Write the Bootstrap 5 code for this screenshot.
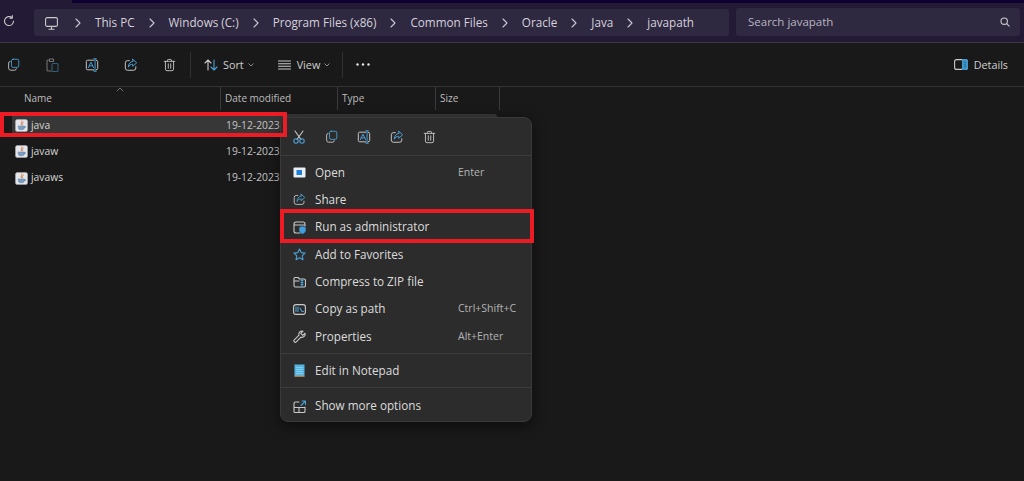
<!DOCTYPE html>
<html lang="en">
<head>
  <meta charset="UTF-8">
  <title>javapath - File Explorer</title>
  <meta name="viewport" content="width=device-width, initial-scale=1">
  <link rel="stylesheet" href="https://cdn.jsdelivr.net/npm/bootstrap@5.3.0/dist/css/bootstrap.min.css">
  <script src="https://cdn.jsdelivr.net/npm/bootstrap@5.3.0/dist/js/bootstrap.bundle.min.js"></script>
  <style>
    html, body { height: 100%; }
    body {
      background: #191919;
      color: #d8d8d8;
      font-family: "Open Sans", "Noto Sans", "Liberation Sans", sans-serif;
      font-size: 11px;
      overflow: hidden;
      position: relative;
    }
    svg { display: block; flex: none; fill: none; stroke-width: 1.1; stroke-linecap: round; stroke-linejoin: round; }
    .g { stroke: #c9c9c9; }
    .b { stroke: #4a9fd4; }

    /* address bar */
    .topbar { height: 43px; background: #231a36; border-bottom: 1px solid #3b3841; position: relative; }
    .strip { position: absolute; top: 0; left: 72px; right: 0; height: 3px; background: #0e0030; }
    .refresh { width: 34px; padding-left: 3px; }
    .crumbs { width: 695px; height: 27px; background: #2f2841; border-radius: 3px; margin-top: 9px; padding: 1px 0 0 11px; color: #d4d2da; font-size: 11.7px; }
    .crumbs .pc { margin-right: 3px; }
    .crumbs .sep { width: 6px; margin: 0 14px; }
    .search { width: 284px; height: 28px; background: #2f2841; border-radius: 3px; margin: 8px 0 0 7px; padding: 0 10px 0 12px; color: #b8b5c0; font-size: 11.5px; }

    /* command bar */
    .toolbar { height: 44px; border-bottom: 1px solid #333; padding-right: 16px; color: #d0d0d0; font-size: 10.8px; }
    .toolbar span { padding-top: 2px; }
    .tool { width: 39px; display: flex; justify-content: center; }
    .tool:first-child { margin-left: -6px; }
    .vsep { width: 1px; height: 26px; background: #303030; }
    .sep-a { margin-left: 1px; }
    .sort-ic { margin-left: 13px; margin-right: 5px; }
    .view-ic { margin-left: 24px; margin-right: 6px; }
    .chev { width: 6px; margin-left: 4px; }
    .sep-b { margin-left: 12px; }
    .dots { margin-left: 13px; }
    .det-ic { margin-left: auto; margin-right: 6px; }

    /* file list */
    .head { height: 24px; position: relative; color: #bdbdbd; font-size: 10px; }
    .head > div { height: 23px; border-right: 1px solid #3a3a3a; padding-left: 4px; display: flex; align-items: center; }
    .head > .c-name { width: 221px; padding-left: 24px; }
    .head > .c-date { width: 117px; }
    .head > .c-type { width: 98px; }
    .head > .c-size { width: 64px; }
    .sort-up { position: absolute; left: 116px; top: 0; }
    .list { font-size: 10.3px; }
    .row-file { height: 26.7px; margin-left: 12px; width: 485px; border-radius: 3px; }
    .row-file.cur { background: #373737; height: 23px; margin-top: 3px; margin-bottom: 1px; }
    .row-file .nm { width: 214px; display: flex; align-items: center; gap: 3px; padding-left: 3px; color: #d6d6d6; }
    .row-file .dt { color: #c4c4c4; }

    /* context menu */
    .ctx.dropdown-menu {
      display: block; left: 280px; top: 117px; width: 252px; height: 305px;
      background: #2c2c2c; border: 1px solid #3a3a3a; border-radius: 8px;
      padding: 0; font-size: 11.7px; color: #dcdcdc; box-shadow: 0 4px 14px rgba(0,0,0,.5);
    }
    .ctx-tools { height: 37px; padding-left: 2px; }
    .ctx-tools .t { width: 32.5px; display: flex; justify-content: center; }
    .ctx .dropdown-divider { border-color: #3c3c3c; margin: 0; opacity: 1; }
    .ctx .gap-line { margin: 3px 0; }
    .ctx .gap-last { margin: 3px 0 4px; }
    .ctx .dropdown-item {
      color: #dcdcdc; height: 27.3px; padding: 0 0 0 12px; display: flex; align-items: center; gap: 9px;
    }
    .ctx .key { position: absolute; left: 177px; color: #b4b4b4; font-size: 10.5px; }
    .first { margin-top: 3px; }

    /* annotations */
    .redbox { position: absolute; border: 4px solid #ed1c24; z-index: 1001; pointer-events: none; }
    .red-file { left: 0; top: 112px; width: 287px; height: 25px; }
    .red-admin { left: 280px; top: 209px; width: 254px; height: 34px; }
  </style>
</head>
<body>
  <svg width="0" height="0" class="position-absolute">
    <symbol id="i-copy" viewBox="0 0 16 16"><rect class="b" x="5.500" y="1.500" width="9" height="10" rx="2"/><path class="g" d="M3.800 4.200A2 2 0 0 0 2 6.200v6.300a2.500 2.500 0 0 0 2.500 2.500h5a2 2 0 0 0 2-1.800"/></symbol>
    <symbol id="i-rename" viewBox="0 0 16 16"><path class="g" d="M10 2.500H3a1.500 1.500 0 0 0-1.500 1.500v8A1.500 1.500 0 0 0 3 13.500h7M13 2.600a1.500 1.500 0 0 1 1.500 1.400v8a1.500 1.500 0 0 1-1.500 1.400"/><path class="b" d="M11.500 1v14M10 1h3M10 15h3M3.800 11 6.800 4.800 9.800 11M4.800 9h4"/></symbol>
    <symbol id="i-share" viewBox="0 0 16 16"><path class="g" d="M6 3H4a2.500 2.500 0 0 0-2.500 2.500v6A2.500 2.500 0 0 0 4 14h7a2.500 2.500 0 0 0 2.500-2.500V10"/><path class="b" d="M10 1.500 14.500 5.500 10 9.500V7.200C7.500 7.200 5.800 8.200 5 10.500 5 6.800 7 4 10 3.800Z"/></symbol>
    <symbol id="i-trash" viewBox="0 0 16 16"><path class="g" d="M1.500 3.500h13M5.500 3.500V2.200A1 1 0 0 1 6.500 1.200h3a1 1 0 0 1 1 1v1.300M3 3.500v9.500a2 2 0 0 0 2 2h6a2 2 0 0 0 2-2V3.500M6.500 6.500v5.500M9.500 6.500v5.500"/></symbol>
    <symbol id="i-java" viewBox="0 0 14 14"><rect x=".5" y=".5" width="13" height="13" rx="2" fill="#e4e6ea" stroke="#a9adb3" stroke-width=".6"/><path d="M7.500 2c1 1.500-2 2.500-.7 4.300M9 3.500c-1.600.7-1.500 1.700-.9 2.800" stroke="#dc6b2f" stroke-width=".9"/><path d="M3.500 7.500h6.500v2a2 2 0 0 1-2 2h-2.500a2 2 0 0 1-2-2zM10 8h1.200v1.500H10" fill="#7d9dc0" stroke="#5c82ab" stroke-width=".5"/></symbol>
    <symbol id="i-chev" viewBox="0 0 6 10"><path d="M1 1l4 4-4 4" stroke="#c9c7cf" stroke-width="1.100"/></symbol>
    <symbol id="i-down" viewBox="0 0 6 4"><path d="M.8 .8 3 3 5.200 .8" stroke="#a8a8a8" stroke-width=".8"/></symbol>
  </svg>

  <div class="topbar d-flex">
    <div class="strip"></div>
    <div class="refresh d-flex align-items-center">
      <svg width="12" height="12" viewBox="0 0 12 12"><path class="g" d="M10.500 6A4.500 4.500 0 1 1 9 2.700M9.300 .6v2.500H6.800"/></svg>
    </div>
    <div class="crumbs d-flex align-items-center">
      <svg class="pc" width="13" height="13" viewBox="0 0 13 13"><rect class="g" x=".6" y=".6" width="11.800" height="8.800" rx="1.500"/><path class="g" d="M4 12.300h5M6.500 9.500v2.800"/></svg>
      <svg class="sep" height="10" viewBox="0 0 6 10"><use href="#i-chev"/></svg><span>This PC</span>
      <svg class="sep" height="10" viewBox="0 0 6 10"><use href="#i-chev"/></svg><span>Windows (C:)</span>
      <svg class="sep" height="10" viewBox="0 0 6 10"><use href="#i-chev"/></svg><span>Program Files (x86)</span>
      <svg class="sep" height="10" viewBox="0 0 6 10"><use href="#i-chev"/></svg><span>Common Files</span>
      <svg class="sep" height="10" viewBox="0 0 6 10"><use href="#i-chev"/></svg><span>Oracle</span>
      <svg class="sep" height="10" viewBox="0 0 6 10"><use href="#i-chev"/></svg><span>Java</span>
      <svg class="sep" height="10" viewBox="0 0 6 10"><use href="#i-chev"/></svg><span>javapath</span>
    </div>
    <div class="search d-flex align-items-center justify-content-between">
      <span>Search javapath</span>
      <svg width="10" height="10" viewBox="0 0 10 10"><circle class="g" cx="4.200" cy="4.200" r="3.200"/><path class="g" d="M6.600 6.600 9.200 9.200"/></svg>
    </div>
  </div>

  <div class="toolbar d-flex align-items-center">
    <div class="tool"><svg width="13" height="13"><use href="#i-copy"/></svg></div>
    <div class="tool opacity-50"><svg width="13" height="14" viewBox="0 0 13 14"><path class="g" d="M3 2H2a1 1 0 0 0-1 1v9a1 1 0 0 0 1 1h3M3.500 1h4v2.500h-4z"/><rect class="b" x="6" y="5.500" width="6" height="8" rx="1"/></svg></div>
    <div class="tool"><svg width="14" height="14"><use href="#i-rename"/></svg></div>
    <div class="tool"><svg width="14" height="14"><use href="#i-share"/></svg></div>
    <div class="tool"><svg width="13" height="14"><use href="#i-trash"/></svg></div>
    <div class="vsep sep-a"></div>
    <svg class="sort-ic" width="14" height="12" viewBox="0 0 14 12"><path class="g" d="M4 11V1M1 4l3-3 3 3"/><path class="b" d="M10 1v10M7 8l3 3 3-3"/></svg>
    <span>Sort</span>
    <svg width="6" height="4" class="chev"><use href="#i-down"/></svg>
    <svg class="view-ic" width="13" height="10" viewBox="0 0 13 10"><path class="g" d="M.5 1h12M.5 3.700h12M.5 6.300h12M.5 9h12"/></svg>
    <span>View</span>
    <svg width="6" height="4" class="chev"><use href="#i-down"/></svg>
    <div class="vsep sep-b"></div>
    <svg class="dots" width="14" height="3" viewBox="0 0 14 3"><circle cx="1.500" cy="1.500" r="1.200" fill="#e6e6e6"/><circle cx="7" cy="1.500" r="1.200" fill="#e6e6e6"/><circle cx="12.500" cy="1.500" r="1.200" fill="#e6e6e6"/></svg>
    <svg class="det-ic" width="14" height="11" viewBox="0 0 14 11"><rect class="g" x=".6" y=".6" width="12.800" height="9.800" rx="2"/><path d="M8.500 .6h3a2 2 0 0 1 2 2v5.800a2 2 0 0 1-2 2h-3z" fill="#3f96cc" stroke="#3f96cc"/><path d="M11 3v.8M11 5.100v.8M11 7.200v.8" stroke="#1c3f55" stroke-width=".8"/></svg>
    <span>Details</span>
  </div>

  <div class="head d-flex">
    <svg class="sort-up" width="8" height="5" viewBox="0 0 8 5"><path d="M1 4 4 1l3 3" stroke="#8a8a8a" stroke-width=".8"/></svg>
    <div class="c-name">Name</div>
    <div class="c-date">Date modified</div>
    <div class="c-type">Type</div>
    <div class="c-size">Size</div>
  </div>

  <div class="list">
    <div class="row-file cur d-flex align-items-center">
      <div class="nm"><svg width="13" height="13"><use href="#i-java"/></svg><span>java</span></div>
      <div class="dt">19-12-2023</div>
    </div>
    <div class="row-file d-flex align-items-center">
      <div class="nm"><svg width="13" height="13"><use href="#i-java"/></svg><span>javaw</span></div>
      <div class="dt">19-12-2023</div>
    </div>
    <div class="row-file d-flex align-items-center">
      <div class="nm"><svg width="13" height="13"><use href="#i-java"/></svg><span>javaws</span></div>
      <div class="dt">19-12-2023</div>
    </div>
  </div>

  <div class="ctx dropdown-menu">
    <div class="ctx-tools d-flex align-items-center">
      <div class="t"><svg width="12" height="14" viewBox="0 0 12 14"><path class="g" d="M2 1l6 8.500M10 1 4 9.500"/><circle class="b" cx="3" cy="11" r="2.200"/><circle class="b" cx="9" cy="11" r="2.200"/></svg></div>
      <div class="t"><svg width="13" height="13"><use href="#i-copy"/></svg></div>
      <div class="t"><svg width="14" height="14"><use href="#i-rename"/></svg></div>
      <div class="t"><svg width="14" height="14"><use href="#i-share"/></svg></div>
      <div class="t"><svg width="13" height="14"><use href="#i-trash"/></svg></div>
    </div>
    <hr class="dropdown-divider">
    <a class="dropdown-item first" href="#">
      <svg width="13" height="11" viewBox="0 0 13 11"><rect x=".5" y=".5" width="12" height="10" rx="1" fill="#eceff3"/><rect x="3.500" y="3" width="5.500" height="5" fill="#1f7fd6"/></svg>Open<span class="key">Enter</span>
    </a>
    <a class="dropdown-item" href="#"><svg width="13" height="13"><use href="#i-share"/></svg>Share</a>
    <a class="dropdown-item" href="#">
      <svg width="13" height="13" viewBox="0 0 13 13"><path class="g" d="M7 12H3a2 2 0 0 1-2-2V3a2 2 0 0 1 2-2h7a2 2 0 0 1 2 2v2M1 4h11"/><path d="M9.500 5.500 12.500 6.500v3c0 1.500-1.500 2.700-3 3.300-1.500-.6-3-1.800-3-3.300v-3z" fill="#3f9fe0" stroke="#3f9fe0" stroke-width=".4"/></svg>Run as administrator
    </a>
    <a class="dropdown-item" href="#"><svg width="13" height="13" viewBox="0 0 13 13"><path class="b" d="M6.500 1l1.700 3.600 3.900.5-2.900 2.700.8 3.900-3.500-2-3.500 2 .8-3.900L.9 5.100l3.900-.5z"/></svg>Add to Favorites</a>
    <a class="dropdown-item" href="#"><svg width="13" height="12" viewBox="0 0 13 12"><path class="g" d="M1 9.500V2.500A1 1 0 0 1 2 1.500h3l1.500 1.500H11a1.500 1.500 0 0 1 1.500 1.500v5A1.500 1.500 0 0 1 11 11H2.500A1.500 1.500 0 0 1 1 9.500zM1 5h5"/><path class="b" d="M9 3v8M8 4.500h2M8 6.500h2M8 8.500h2"/></svg>Compress to ZIP file</a>
    <a class="dropdown-item" href="#"><svg width="13" height="11" viewBox="0 0 13 11"><rect class="g" x=".6" y=".6" width="11.800" height="9.800" rx="2.500"/><path class="b" d="M3 3v4.500M5 3v4.500M7 4l2 3.500h1.500"/></svg>Copy as path<span class="key">Ctrl+Shift+C</span></a>
    <a class="dropdown-item" href="#"><svg width="13" height="13" viewBox="0 0 13 13"><path class="g" d="M12 3.200 9.800 5.400 7.800 3.400 10 1.200A3.200 3.200 0 0 0 6 5.200L1.300 9.800a1.300 1.300 0 0 0 2 2L7.900 7.200a3.200 3.200 0 0 0 4.100-4z"/></svg>Properties<span class="key">Alt+Enter</span></a>
    <hr class="dropdown-divider gap-line">
    <a class="dropdown-item" href="#"><svg width="13" height="13" viewBox="0 0 13 13"><rect x="1.500" y=".5" width="10" height="12" fill="#52b5e4"/><rect x="1.500" y="11.600" width="10" height="1" fill="#d98a3a"/><path d="M3.500 3.500h6M3.500 5.500h6M3.500 7.500h6M3.500 9.500h6" stroke="#a8dcf3" stroke-width=".6"/></svg>Edit in Notepad</a>
    <hr class="dropdown-divider gap-last">
    <a class="dropdown-item" href="#"><svg width="13" height="13" viewBox="0 0 13 13"><path class="g" d="M6 2H2.500A1.500 1.500 0 0 0 1 3.500v8A1 1 0 0 0 2 12.500h9a1 1 0 0 0 1-1V7M1 7.500h11M6 7.500v5"/><path class="b" d="M8 5.500 12 1.500M9 1h3.500v3.500"/></svg>Show more options</a>
  </div>

  <div class="redbox red-file"></div>
  <div class="redbox red-admin"></div>
</body>
</html>
